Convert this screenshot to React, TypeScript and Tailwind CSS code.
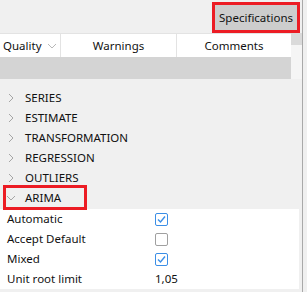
const font = "font-['Segoe_UI','Noto_Sans','Open_Sans',sans-serif]";

const treeItems = ["SERIES", "ESTIMATE", "TRANSFORMATION", "REGRESSION", "OUTLIERS"];

const ChevronRight = () => (
  <svg width="10" height="10" viewBox="0 0 10 10" className="shrink-0">
    <polyline points="3,1 7,5 3,9" fill="none" stroke="#a6a6a6" strokeWidth="1" />
  </svg>
);

const ChevronDown = ({ color = "#a6a6a6" }: { color?: string }) => (
  <svg width="10" height="10" viewBox="0 0 10 10" className="shrink-0">
    <polyline points="1,3 5,7 9,3" fill="none" stroke={color} strokeWidth="1" />
  </svg>
);

const Checkbox = ({ checked }: { checked: boolean }) => (
  <div
    className={`w-[13px] h-[13px] rounded-[2px] border bg-white flex items-center justify-center ${
      checked ? "border-[#3b8ee6]" : "border-[#a0a0a0]"
    }`}
  >
    {checked && (
      <svg width="9" height="9" viewBox="0 0 9 9">
        <polyline points="1,4.5 3.5,7 8,1.5" fill="none" stroke="#3b8ee6" strokeWidth="1.4" />
      </svg>
    )}
  </div>
);

const PropRow = ({ label, children }: { label: string; children: React.ReactNode }) => (
  <div className="h-[20px] flex items-center">
    <span className="w-[155px] pl-[7px]">{label}</span>
    {children}
  </div>
);

export default function App() {
  return (
    <div className={`w-[307px] h-[292px] bg-[#f0f0f0] flex text-[11.5px] text-[#111] leading-none ${font}`}>
      <div className="w-[302px] flex flex-col">
        {/* top bar */}
        <div className="h-[33px] flex justify-end pt-[2px] pr-[2px]">
          <div className="h-[31px] border-[3px] border-[#ec1c24] bg-[#cdcdcd] flex items-center px-[4px]">
            Specifications
          </div>
        </div>

        {/* table */}
        <div className="flex">
          <div className="w-[291px] flex flex-col">
            <div className="h-[24px] bg-white border-t border-[#e3e3e3] flex items-center">
              <div className="w-[61px] h-full border-r border-[#e3e3e3] flex items-center pl-[3px] gap-[5px]">
                <span>Quality</span>
                <ChevronDown color="#b8b8b8" />
              </div>
              <div className="w-[116px] h-full border-r border-[#e3e3e3] flex items-center justify-center">
                Warnings
              </div>
              <div className="flex-1 h-full flex items-center justify-center">Comments</div>
            </div>
            <div className="h-[22px] bg-[#d4d4d4]" />
          </div>
          <div className="w-[11px] flex flex-col">
            <div className="h-[12px] bg-[#dadada]" />
            <div className="flex-1 bg-[#f5f5f5]" />
          </div>
        </div>

        {/* tree */}
        <div className="mt-[9px] flex flex-col">
          {treeItems.map((item) => (
            <div key={item} className="h-[20px] flex items-center pl-[6px] gap-[9px]">
              <ChevronRight />
              <span>{item}</span>
            </div>
          ))}
          <div className="relative h-[20px] flex items-center pl-[6px] gap-[9px]">
            <ChevronDown />
            <span>ARIMA</span>
            <div className="absolute left-[3px] top-[-3px] w-[84px] h-[25px] border-[3px] border-[#ec1c24]" />
          </div>
        </div>

        {/* properties */}
        <div className="w-[299px] mt-px bg-white flex flex-col">
          <PropRow label="Automatic">
            <Checkbox checked />
          </PropRow>
          <PropRow label="Accept Default">
            <Checkbox checked={false} />
          </PropRow>
          <PropRow label="Mixed">
            <Checkbox checked />
          </PropRow>
          <PropRow label="Unit root limit">
            <span>1,05</span>
          </PropRow>
        </div>
      </div>
      <div className="w-px bg-[#a9a9a9]" />
    </div>
  );
}
